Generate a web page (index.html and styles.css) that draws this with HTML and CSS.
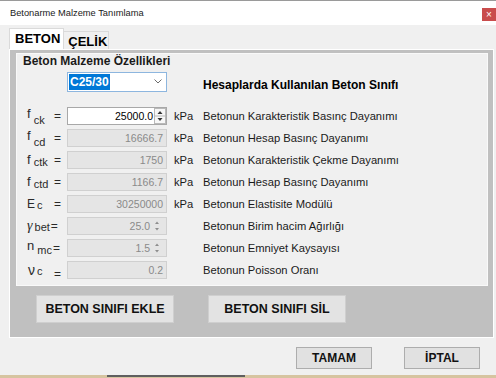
FILE: index.html
```html
<!DOCTYPE html>
<html lang="tr">
<head>
    <meta charset="UTF-8">
    <title>Betonarme Malzeme Tanımlama</title>
    <link rel="stylesheet" href="styles.css">
</head>
<body>
    <div class="window">
        <div class="titlebar">
            <span class="title">Betonarme Malzeme Tanımlama</span>
            <span class="close">×</span>
        </div>
        <div class="tabs">
            <div class="tab tab-active">BETON</div>
            <div class="tab">ÇELİK</div>
        </div>
        <div class="panel">
            <div class="group">
                <div class="group-title">Beton Malzeme Özellikleri</div>
                <div class="class-row">
                    <div class="combo">
                        <span class="combo-value">C25/30</span>
                        <svg class="chevron" width="8" height="5" viewBox="0 0 8 5"><path d="M0.5 0.5L4 4L7.5 0.5" fill="none" stroke="#6d6d6d"/></svg>
                    </div>
                    <div class="class-label">Hesaplarda Kullanılan Beton Sınıfı</div>
                </div>
                <div class="props">
                    <div class="prop">
                        <div class="label"><span class="sym up">f</span><span class="sub down">ck</span><span class="eq">=</span></div>
                        <div class="field field-on"><span>25000.0</span>
                            <svg class="spin" width="12" height="16" viewBox="0 0 12 16"><rect x="0.5" y="0.5" width="11" height="15" fill="#f7f7f7" stroke="#b9b9b9"/><line x1="1" y1="8" x2="11" y2="8" stroke="#b9b9b9"/><path d="M3.5 6h5L6 3z" fill="#333"/><path d="M3.5 10h5L6 13z" fill="#333"/></svg>
                        </div>
                        <div class="unit">kPa</div>
                        <div class="desc">Betonun Karakteristik Basınç Dayanımı</div>
                    </div>
                    <div class="prop">
                        <div class="label"><span class="sym up">f</span><span class="sub down">cd</span><span class="eq">=</span></div>
                        <div class="field">16666.7</div>
                        <div class="unit">kPa</div>
                        <div class="desc">Betonun Hesap Basınç Dayanımı</div>
                    </div>
                    <div class="prop">
                        <div class="label"><span class="sym">f</span><span class="sub">ctk</span><span class="eq">=</span></div>
                        <div class="field">1750</div>
                        <div class="unit">kPa</div>
                        <div class="desc">Betonun Karakteristik Çekme Dayanımı</div>
                    </div>
                    <div class="prop">
                        <div class="label"><span class="sym">f</span><span class="sub">ctd</span><span class="eq">=</span></div>
                        <div class="field">1166.7</div>
                        <div class="unit">kPa</div>
                        <div class="desc">Betonun Hesap Basınç Dayanımı</div>
                    </div>
                    <div class="prop">
                        <div class="label"><span class="sym sym-e">E</span><span class="sub sub-flat">c</span><span class="eq">=</span></div>
                        <div class="field">30250000</div>
                        <div class="unit">kPa</div>
                        <div class="desc">Betonun Elastisite Modülü</div>
                    </div>
                    <div class="prop">
                        <div class="label"><span class="sym sym-greek">γ</span><span class="sub sub-flat">bet</span><span class="eq eq-tight">=</span></div>
                        <div class="field"><span>25.0</span>
                            <svg class="spin" width="12" height="16" viewBox="0 0 12 16"><path d="M4 6h4L6 3.5z" fill="#8d8d8d"/><path d="M4 10h4L6 12.5z" fill="#8d8d8d"/></svg>
                        </div>
                        <div class="unit"></div>
                        <div class="desc">Betonun Birim hacim Ağırlığı</div>
                    </div>
                    <div class="prop">
                        <div class="label"><span class="sym up">n</span><span class="sub">mc</span><span class="eq eq-tight">=</span></div>
                        <div class="field"><span>1.5</span>
                            <svg class="spin" width="12" height="16" viewBox="0 0 12 16"><path d="M4 6h4L6 3.5z" fill="#8d8d8d"/><path d="M4 10h4L6 12.5z" fill="#8d8d8d"/></svg>
                        </div>
                        <div class="unit"></div>
                        <div class="desc">Betonun Emniyet Kaysayısı</div>
                    </div>
                    <div class="prop">
                        <div class="label"><span class="sym sym-nu">ν</span><span class="sub sub-flat">c</span><span class="eq down">=</span></div>
                        <div class="field">0.2</div>
                        <div class="unit"></div>
                        <div class="desc">Betonun Poisson Oranı</div>
                    </div>
                </div>
            </div>
            <div class="actions">
                <button class="action-btn">BETON SINIFI EKLE</button>
                <button class="action-btn">BETON SINIFI SİL</button>
            </div>
        </div>
        <div class="footer">
            <button class="btn">TAMAM</button>
            <button class="btn">İPTAL</button>
        </div>
        <div class="desk"><span class="desk-bar"></span></div>
    </div>
</body>
</html>
```

FILE: styles.css
```css
body {
    margin: 0;
    background-color: #f0f0f0;
    color: #000000;
    font-family: 'Liberation Sans', Arial, sans-serif;
}
.window {
    width: 496px;
    height: 378px;
    box-sizing: border-box;
    border-top: 1px solid #9a9a9a;
    overflow: hidden;
}
.titlebar {
    height: 24px;
    background-color: #ffffff;
    display: flex;
    align-items: center;
    justify-content: space-between;
    padding-left: 10px;
}
.title {
    font-size: 9.3px;
    color: #1a1a1a;
}
.close {
    align-self: flex-start;
    margin-top: 7px;
    width: 14px;
    height: 13px;
    background-color: #c94c4c;
    color: #ffffff;
    font-size: 10px;
    line-height: 13px;
    text-align: center;
}
.tabs {
    height: 24px;
    display: flex;
    align-items: flex-end;
    padding-left: 9px;
}
.tab {
    height: 17px;
    padding: 0 1px 0 4px;
    margin-left: -1px;
    border: 1px solid #dadada;
    border-bottom: none;
    font-size: 13px;
    font-weight: bold;
    line-height: 19px;
}
.tab-active {
    height: 20px;
    margin-left: 0;
    padding: 0 3px 0 5px;
    background-color: #ffffff;
    line-height: 19px;
    position: relative;
    z-index: 1;
}
.panel {
    margin-left: 9px;
    width: 485px;
    height: 289px;
    box-sizing: border-box;
    border: 1px solid #ffffff;
    background-color: #c0c0c0;
    padding: 3px 5px 0 6px;
}
.group {
    height: 233px;
    box-sizing: border-box;
    border: 1px solid #f9f9f9;
    background-color: #f0f0f0;
}
.group-title {
    font-size: 12px;
    font-weight: bold;
    line-height: 14px;
    padding-left: 6px;
    color: #1a1a1a;
}
.class-row {
    display: flex;
    align-items: flex-end;
    margin-top: 4px;
    padding-left: 50px;
}
.combo {
    width: 100px;
    height: 20px;
    box-sizing: border-box;
    border: 1px solid #8db6df;
    background-color: #ffffff;
    display: flex;
    align-items: center;
    justify-content: space-between;
    padding: 1px 4px 1px 1px;
}
.combo-value {
    background-color: #0078d7;
    color: #ffffff;
    font-size: 12px;
    font-weight: bold;
    line-height: 16px;
    padding: 0 1px;
}
.chevron {
    margin-bottom: 2px;
}
.class-label {
    margin-left: 36px;
    font-size: 12px;
    font-weight: bold;
    line-height: 14px;
}
.props {
    margin-top: 13px;
    padding-left: 10px;
}
.prop {
    display: grid;
    grid-template-columns: 40px 100px 36px 1fr;
    align-items: center;
    height: 22px;
}
.label {
    display: flex;
    align-items: center;
    padding-right: 6px;
    color: #2a2a2a;
}
.sym {
    font-size: 13px;
    line-height: 14px;
}
.sub {
    font-size: 11px;
    line-height: 12px;
    margin-left: 3px;
    margin-top: 4px;
}
.up {
    margin-bottom: 4px;
}
.down {
    margin-top: 8px;
}
.sym-e {
    font-size: 12px;
}
.sym-greek {
    font-family: 'Liberation Serif', serif;
    font-style: italic;
    font-size: 14px;
}
.sym-nu {
    font-size: 14px;
    margin-left: 1px;
}
.sub-flat {
    margin-top: 2px;
    margin-left: 2px;
}
.eq {
    margin-left: auto;
    font-size: 12px;
}
.eq-tight {
    margin-left: 1px;
}
.field {
    height: 18px;
    box-sizing: border-box;
    border: 1px solid #d0d0d0;
    background-color: #e5e5e5;
    color: #8a8a8a;
    font-size: 10.5px;
    display: flex;
    align-items: center;
    justify-content: flex-end;
    padding-right: 3px;
}
.field-on {
    background-color: #ffffff;
    border-color: #a8a8a8;
    color: #000000;
    padding-right: 0;
}
.spin {
    margin-left: 1px;
}
.unit {
    padding-left: 7px;
    font-size: 11.2px;
    color: #1a1a1a;
}
.desc {
    font-size: 11.2px;
    color: #1a1a1a;
}
.actions {
    display: flex;
    gap: 34px;
    margin-top: 9px;
    padding-left: 20px;
}
.action-btn {
    width: 138px;
    height: 28px;
    padding: 0;
    border: 1px solid #cfcfcf;
    background-color: #e3e3e3;
    font-family: 'Liberation Sans', Arial, sans-serif;
    font-size: 12.5px;
    font-weight: bold;
    color: #111111;
}
.footer {
    display: flex;
    justify-content: flex-end;
    gap: 32px;
    padding: 9px 16px 6px 0;
}
.btn {
    width: 76px;
    height: 22px;
    padding: 0;
    border: 1px solid #adadad;
    background-color: #e1e1e1;
    font-family: 'Liberation Sans', Arial, sans-serif;
    font-size: 12px;
    font-weight: bold;
    color: #111111;
}
.desk {
    height: 3px;
    background-color: #d6c4a0;
}
.desk-bar {
    display: block;
    margin-left: 107px;
    width: 138px;
    height: 2px;
    background-color: #5f5f5f;
}
```
